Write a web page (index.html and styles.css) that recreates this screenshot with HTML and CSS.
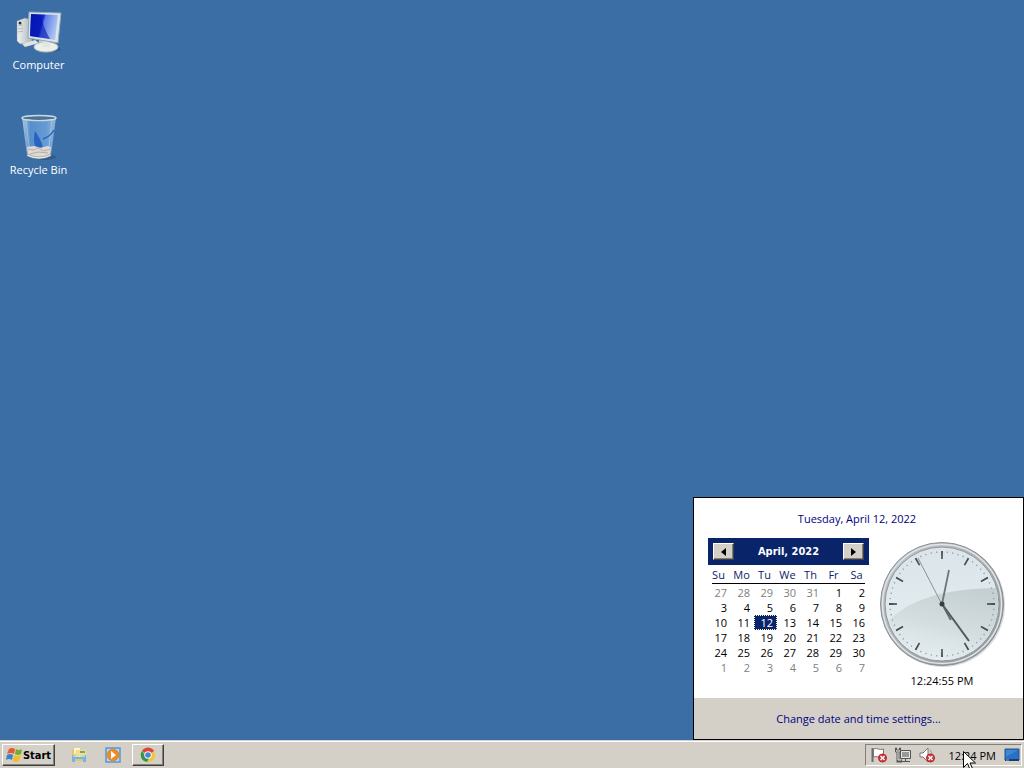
FILE: index.html
```html
<!DOCTYPE html>
<html lang="en">
<head>
<meta charset="utf-8">
<title>Desktop</title>
<link rel="stylesheet" href="styles.css">
</head>
<body>
<main class="desktop">
  <div class="shortcuts">
    <a class="shortcut" href="#computer">
      <svg width="48" height="48" viewBox="0 0 48 48" aria-hidden="true">
        <defs>
          <linearGradient id="screen" x1="0" y1="0" x2="1" y2=".25"><stop offset="0" stop-color="#0717a8"/><stop offset=".48" stop-color="#1025cf"/><stop offset=".55" stop-color="#5e7be6"/><stop offset="1" stop-color="#a9c4f2"/></linearGradient>
          <linearGradient id="tower" x1="0" x2="1"><stop offset="0" stop-color="#f2f3f0"/><stop offset="1" stop-color="#a9b3ba"/></linearGradient>
        </defs>
        <ellipse cx="36" cy="41" rx="10" ry="3" fill="#234a79" opacity=".5"/>
        <path d="M2 13 10 10l7 2v23L5 36l-3-3z" fill="url(#tower)" stroke="#7d8f9f" stroke-width=".5"/>
        <path d="M3 18l5-1M3 21l5-1M3 24l5-1" stroke="#b4babd"/>
        <circle cx="5" cy="15" r="1.5" fill="#263a35"/>
        <path d="M7 36l13-4 4 3-14 4z" fill="#e1e3e0"/>
        <path d="M24 29h9l2 8H24z" fill="#c7cdcf"/>
        <ellipse cx="31" cy="39" rx="12" ry="5" fill="#eceeea" stroke="#b9bfc1"/>
        <path d="M28 32h6l1 7h-8z" fill="#e3e5e3"/>
        <path d="M14 4 46 5l-3 30-30-5z" fill="#dde4e9" stroke="#8ea7bb"/>
        <path d="M16 6 43 7l-3 25-25-4z" fill="url(#screen)"/>
        <path d="m16 6 10 1q2 12 9 24L15 28z" fill="#0315b0" opacity=".6"/>
      </svg>
      <span>Computer</span>
    </a>
    <a class="shortcut" href="#recycle-bin">
      <svg width="48" height="48" viewBox="0 0 48 48" aria-hidden="true">
        <defs><linearGradient id="glass" x1="0" x2="1"><stop offset="0" stop-color="#bfd8ef"/><stop offset=".25" stop-color="#5d94d0"/><stop offset=".7" stop-color="#6ea2da"/><stop offset="1" stop-color="#a3c3e3"/></linearGradient></defs>
        <ellipse cx="29" cy="44" rx="12" ry="3" fill="#23496f" opacity=".5"/>
        <path d="M7 4 12 42q12 7 24 0L41 4z" fill="url(#glass)" opacity=".85"/>
        <path d="m11 7 4 34M37 7l-4 34" stroke="#c3dcef" opacity=".5"/>
        <path d="M20 18q-2 8 0 15l8 2q-2-9-8-17z" fill="#1552c0" opacity=".75"/>
        <path d="M39 17q-3 6-11 9" fill="none" stroke="#2767b8" stroke-width="1.5"/>
        <path d="m12 34 7-1 6 2 7-2 4 1-1 8q-11 6-22 0z" fill="#dddad6"/>
        <path d="m13 36 6 1 4-2 6 3 6-2M15 41l8-2 10 1" stroke="#bdaaa2" fill="none"/>
        <path d="M12 41q12 6 24 0v2q-12 6-24 0z" fill="#edf0ef" stroke="#777b7d" stroke-width=".5"/>
        <ellipse cx="24" cy="5" rx="17" ry="2.5" fill="#4a7399" stroke="#c4dae8" stroke-width="1.5"/>
        <path d="M9 5q15 3 30 0" fill="none" stroke="#5c6870" stroke-width=".8"/>
      </svg>
      <span>Recycle Bin</span>
    </a>
  </div>

  <section class="flyout" aria-label="Date and time">
    <div class="flyout-body">
      <a class="date" href="#today">Tuesday, April 12, 2022</a>
      <div class="panels">
        <div class="calendar">
          <div class="month">
            <button class="step" aria-label="Previous month"><svg width="5" height="8" viewBox="0 0 5 8"><path d="M5 0v8L0 4z"/></svg></button>
            <strong>April, 2022</strong>
            <button class="step" aria-label="Next month"><svg width="5" height="8" viewBox="0 0 5 8"><path d="M0 0v8l5-4z"/></svg></button>
          </div>
          <table class="days">
            <thead><tr><th>Su</th><th>Mo</th><th>Tu</th><th>We</th><th>Th</th><th>Fr</th><th>Sa</th></tr></thead>
            <tbody>
              <tr><td class="other">27</td><td class="other">28</td><td class="other">29</td><td class="other">30</td><td class="other">31</td><td>1</td><td>2</td></tr>
              <tr><td>3</td><td>4</td><td>5</td><td>6</td><td>7</td><td>8</td><td>9</td></tr>
              <tr><td>10</td><td>11</td><td class="today">12</td><td>13</td><td>14</td><td>15</td><td>16</td></tr>
              <tr><td>17</td><td>18</td><td>19</td><td>20</td><td>21</td><td>22</td><td>23</td></tr>
              <tr><td>24</td><td>25</td><td>26</td><td>27</td><td>28</td><td>29</td><td>30</td></tr>
              <tr><td class="other">1</td><td class="other">2</td><td class="other">3</td><td class="other">4</td><td class="other">5</td><td class="other">6</td><td class="other">7</td></tr>
            </tbody>
          </table>
        </div>
        <div class="clock">
          <svg width="128" height="128" viewBox="0 0 128 128" role="img" aria-label="12:24:55">
            <defs>
              <linearGradient id="rim" x1="0" y1="0" x2="1" y2="1"><stop offset="0" stop-color="#c5c9cc"/><stop offset="1" stop-color="#8d9398"/></linearGradient>
              <linearGradient id="face" x1="0" y1="0" x2="0" y2="1"><stop offset="0" stop-color="#dbe5e9"/><stop offset="1" stop-color="#e6eef1"/></linearGradient>
              <linearGradient id="shade" x1=".8" y1="0" x2=".4" y2="1"><stop offset="0" stop-color="#c4cfd1"/><stop offset=".5" stop-color="#d3dddf"/><stop offset="1" stop-color="#eaf1f4"/></linearGradient>
              <clipPath id="dial"><circle cx="64" cy="64" r="56"/></clipPath>
            </defs>
            <circle cx="65" cy="65" r="62" fill="#d9dcdc"/>
            <circle cx="64" cy="64" r="61.5" fill="url(#rim)" stroke="#8a9095"/>
            <circle cx="64" cy="64" r="59.5" fill="none" stroke="#e1e5e7" stroke-width="1.5"/>
            <circle cx="64" cy="64" r="57" fill="url(#face)" stroke="#8e969b"/>
            <path d="M2 92Q30 47 126 48v80H8z" fill="url(#shade)" clip-path="url(#dial)"/>
            <circle cx="64" cy="64" r="52" fill="none" stroke="#8e989d" stroke-width="1.5" pathLength="600" stroke-dasharray="2 8" stroke-dashoffset="1"/>
            <circle cx="64" cy="64" r="49" fill="none" stroke="#414c52" stroke-width="8" pathLength="360" stroke-dasharray="2 28" stroke-dashoffset="1"/>
            <path d="M64 64 71 30" stroke="#6e777b" stroke-width="1.8"/>
            <path d="M64 64 91 101" stroke="#4e575c" stroke-width="2"/>
            <path d="M72 80 40 18" stroke="#8b9396"/>
            <path d="m64 64 9 16" stroke="#596267" stroke-width="1.5"/>
            <circle cx="64" cy="64" r="2.5" fill="#343d41"/>
          </svg>
          <time>12:24:55 PM</time>
        </div>
      </div>
    </div>
    <footer class="flyout-footer"><a href="#settings">Change date and time settings...</a></footer>
  </section>
</main>

<nav class="taskbar" aria-label="Taskbar">
  <button class="start">
    <svg width="16" height="16" viewBox="0 0 16 16" aria-hidden="true"><path d="M3 2q3-2 6 0L8 7Q5 5 1 7z" fill="#e75b27"/><path d="M10 2q3 2 6 0l-1 5q-3 2-6 0z" fill="#72ad2e"/><path d="M1 8q3-2 6 0l-1 5q-3-2-6 0z" fill="#3a82ca"/><path d="M8 8q3 2 7 0l-2 6q-3 2-6 0z" fill="#f4bd25"/></svg>
    <span>Start</span>
  </button>
  <div class="launchers">
    <button class="launcher" aria-label="File Explorer"><svg width="16" height="16" viewBox="0 0 16 16"><path d="M1 2h5l1 2h7v10H1z" fill="#e6c95d"/><path d="M3 1h6v6H3z" fill="#fff6cf"/><path d="M5 3h10v8H3z" fill="#f3de8b"/><path d="M9 4h5v2H9z" fill="#76aa64"/><path d="M1 8q7 2 14 0v7h-3v-3H4v3H1z" fill="#78b4de"/><path d="M2 9q6 1 12 0" fill="none" stroke="#c9eaff"/></svg></button>
    <button class="launcher" aria-label="Media Player"><svg width="16" height="16" viewBox="0 0 16 16"><path d="M1 1h14v14H1z" fill="#b5d5ef" stroke="#5897cf" stroke-width="1.5"/><circle cx="8" cy="8" r="5.8" fill="#f08b20" stroke="#db8637"/><path d="m6 4 5 4-5 4z" fill="#fff"/></svg></button>
    <button class="launcher running" aria-label="Chrome"><svg width="16" height="16" viewBox="0 0 16 16"><circle cx="8" cy="8" r="7" fill="#f3c52e"/><path d="M8 8 2 4a7 7 0 0 1 12 0z" fill="#dc4437"/><path d="M2 4a7 7 0 0 0 5 11l3-6-5-1z" fill="#329653"/><circle cx="8" cy="8" r="3.7" fill="#fff"/><circle cx="8" cy="8" r="2.8" fill="#4385df"/></svg></button>
  </div>
  <div class="tray">
    <button class="tray-icon" aria-label="Action Center"><svg width="16" height="16" viewBox="0 0 16 16"><path d="M1.5 1v14" stroke="#6c6c6c" stroke-width="2"/><path d="M2.5 2q3-1 5 0t5 0v8q-3 1-5 0t-5 0z" fill="#fff" stroke="#777"/><circle cx="11.5" cy="11" r="4" fill="#d43842" stroke="#b8222d"/><path d="m9.5 9 4 4m0-4-4 4" stroke="#fff" stroke-width="1.4"/></svg></button>
    <button class="tray-icon" aria-label="Network"><svg width="16" height="16" viewBox="0 0 16 16"><path d="M5.5 3.5h10v8h-10z" fill="#999" stroke="#555"/><path d="M6.5 4.5h8v6h-8z" fill="none" stroke="#e7e7e7"/><path d="M10.5 12v2M6 14.5h9" stroke="#555"/><path d="M.5 1v4h5V1h-1v2h-3V1z" fill="#eee" stroke="#555"/><path d="M3 5v9h4" fill="none" stroke="#555" stroke-width="3"/><path d="M3 5v8h3" fill="none" stroke="#eee"/></svg></button>
    <button class="tray-icon" aria-label="Volume"><svg width="16" height="16" viewBox="0 0 16 16"><path d="M1 6h3l5-5v14l-5-5H1z" fill="#fff" stroke="#777"/><path d="M11 3q2 2 2 5" fill="none" stroke="#999"/><circle cx="11.5" cy="11" r="4" fill="#d43842" stroke="#b8222d"/><path d="m9.5 9 4 4m0-4-4 4" stroke="#fff" stroke-width="1.4"/></svg></button>
    <button class="tray-time">12:24 PM</button>
    <button class="tray-icon" aria-label="Show desktop"><svg width="16" height="16" viewBox="0 0 16 16"><path d="M1 2h14v11H1z" fill="#2671c5" stroke="#275493"/><path d="M2 3h12L2 10z" fill="#3f86d4"/><path d="M1 12h14v2H1z" fill="#173d73"/><path d="M2 13h3" stroke="#8abfe9"/></svg></button>
  </div>
</nav>
<svg class="cursor" width="13" height="20" viewBox="0 0 13 20" aria-hidden="true"><path d="M.5.5v16l4-4 3 7 2.500-1-3-6.500h5.500z" fill="#fff" stroke="#000"/></svg>
</body>
</html>
```
FILE: styles.css
```css
* { box-sizing: border-box; }
body {
  margin: 0;
  min-height: 100vh;
  display: flex;
  flex-direction: column;
  position: relative;
  overflow: hidden;
  background: #3a6ea5;
  color: #000;
  font: 11px/15px "Open Sans", "Noto Sans", sans-serif;
}
button { font: inherit; color: inherit; border: 0; padding: 0; background: none; }
a { color: #000080; text-decoration: none; }
svg { display: block; flex: none; }

.desktop { flex: 1; position: relative; }
.shortcuts { display: flex; flex-direction: column; align-items: flex-start; gap: 41px; padding: 8px 0; }
.shortcut { width: 77px; display: flex; flex-direction: column; align-items: center; gap: 1px; color: #fff; }

.flyout { position: absolute; right: 0; bottom: 0; width: 331px; background: #fff; border: 1px solid #000; }
.flyout-body { padding: 13px 17px 10px 14px; display: flex; flex-direction: column; align-items: center; gap: 12px; }
.panels { align-self: stretch; display: flex; justify-content: space-between; align-items: flex-start; }
.calendar { width: 161px; }
.month { height: 27px; display: flex; align-items: center; justify-content: space-between; padding: 0 5px; background: #0a246a; color: #fff; font-family: "DejaVu Sans Condensed", sans-serif; }
.step { width: 21px; height: 17px; display: grid; place-items: center; background: #d4d0c8; border: 1px solid; border-color: #fff #404040 #404040 #fff; box-shadow: inset -1px -1px #808080; }
.days { width: 100%; border-collapse: collapse; table-layout: fixed; background: linear-gradient(#000, #000) 4px 18px / 153px 1px no-repeat; }
.days th { height: 19px; padding: 0 2px 1px 0; color: #0a246a; font-weight: normal; text-align: center; }
.days td { height: 15px; padding: 0 4px 0 0; text-align: right; line-height: 15px; }
.days tbody tr:first-child td { height: 16px; }
.days .other { color: #808080; }
.days .today { background: #0a246a; color: #fff; outline: 1px dotted #fff; outline-offset: -1px; }
.clock { display: flex; flex-direction: column; align-items: center; gap: 5px; padding-top: 2px; }
.flyout-footer { height: 41px; display: grid; place-items: center; background: #d4d0c8; }

.taskbar { height: 28px; display: flex; align-items: center; gap: 9px; padding: 1px 2px 0; background: #d4d0c8; border-top: 1px solid #d4d0c8; box-shadow: inset 0 1px #fff; }
.start { height: 22px; width: 53px; display: flex; align-items: center; justify-content: center; gap: 1px; font: bold 11px/15px "DejaVu Sans Condensed", sans-serif; border: 1px solid; border-color: #fff #404040 #404040 #fff; box-shadow: inset -1px -1px #808080; }
.launchers { display: flex; gap: 4px; }
.launcher { width: 30px; height: 22px; display: grid; place-items: center; }
.running { width: 32px; border: 1px solid; border-color: #fff #404040 #404040 #fff; box-shadow: inset -1px -1px #808080; }
.tray { margin-left: auto; height: 22px; display: flex; align-items: center; gap: 8px; padding: 0 1px 0 5px; border: 1px solid; border-color: #808080 #fff #fff #808080; }
.tray-time { margin-left: 6px; }
.cursor { position: absolute; right: 48px; bottom: -3px; }
```
